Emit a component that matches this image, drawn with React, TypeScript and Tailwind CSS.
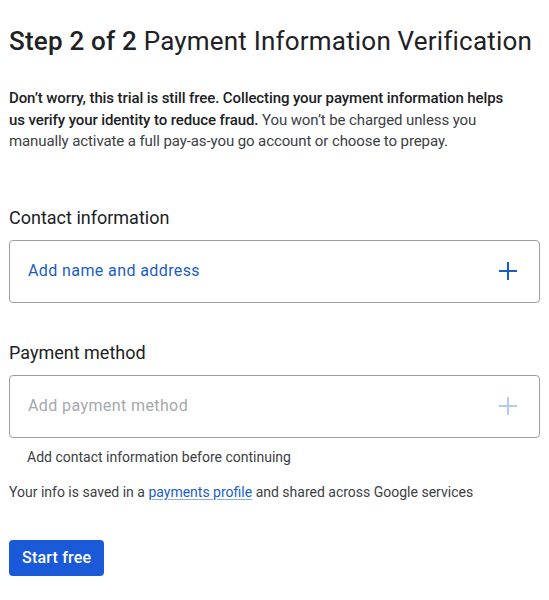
import React from "react";

function Plus({ className }: { className: string }) {
  return (
    <svg width="18" height="18" viewBox="0 0 18 18" className={className}>
      <path d="M9 0v18M0 9h18" stroke="currentColor" strokeWidth="2" fill="none" />
    </svg>
  );
}

export default function App() {
  return (
    <div className="min-h-[600px] w-[549px] bg-white font-['Roboto',sans-serif] text-[#202124]">
      <div className="px-[9px] pt-[24px]">
        <h1 className="text-[26px] leading-[34px] tracking-[0.2px] text-[#202124]">
          <span className="font-medium">Step 2 of 2</span> Payment Information Verification
        </h1>

        <p className="mt-[30px] w-[512px] text-[15px] leading-[21.5px] tracking-[-0.1px] text-[#3c4043]">
          <span className="font-medium text-[#202124]">
            Don’t worry, this trial is still free. Collecting your payment information helps us verify your identity to reduce fraud.
          </span>{" "}
          You won’t be charged unless you manually activate a full pay-as-you go account or choose to prepay.
        </p>

        <h2 className="mt-[53px] text-[18px] leading-[24px] text-[#202124]">Contact information</h2>
        <button
          type="button"
          className="mt-[10px] flex h-[63px] w-[531px] items-center justify-between rounded-[4px] border border-[#9aa0a6] pl-[18px] pr-[22px] text-left"
        >
          <span className="text-[16px] tracking-[0.4px] text-[#1a5dc9]">Add name and address</span>
          <Plus className="text-[#1a5dc9]" />
        </button>

        <h2 className="mt-[38px] text-[18px] leading-[24px] text-[#202124]">Payment method</h2>
        <button
          type="button"
          className="mt-[10px] flex h-[63px] w-[531px] items-center justify-between rounded-[4px] border border-[#9aa0a6] pl-[18px] pr-[22px] text-left"
        >
          <span className="text-[16px] tracking-[0.4px] text-[#a6a8ab]">Add payment method</span>
          <Plus className="text-[#b6c9ee]" />
        </button>
        <p className="mt-[9px] pl-[18px] text-[14px] leading-[20px] text-[#3c4043]">
          Add contact information before continuing
        </p>

        <p className="mt-[15px] text-[14px] leading-[20px] text-[#3c4043]">
          Your info is saved in a{" "}
          <a href="#" className="text-[#1a5dc9] underline decoration-[#8ab0e8] underline-offset-2">
            payments profile
          </a>{" "}
          and shared across Google services
        </p>

        <button
          type="button"
          className="mt-[38px] h-[36px] rounded-[4px] bg-[#1a5ad9] px-[13px] text-[16px] font-medium tracking-[0.2px] text-white"
        >
          Start free
        </button>
      </div>
    </div>
  );
}
